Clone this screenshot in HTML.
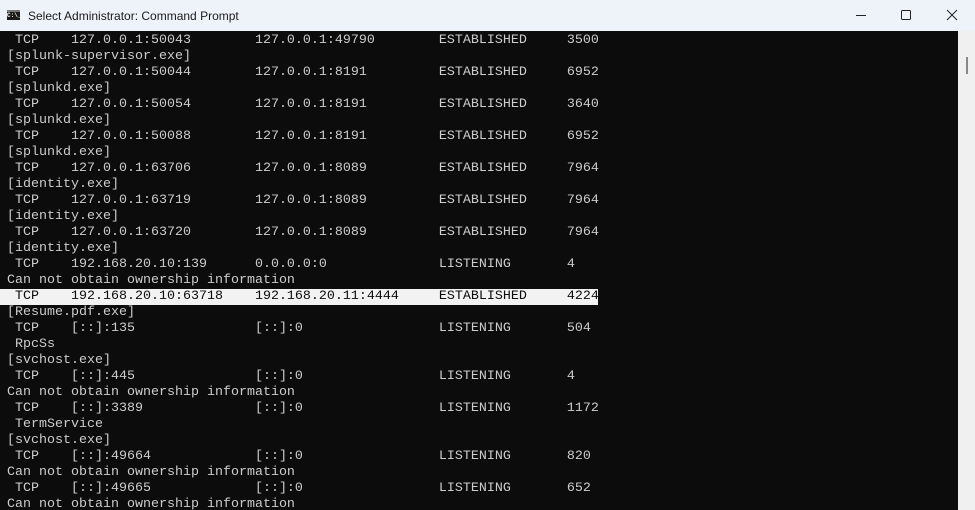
<!DOCTYPE html>
<html><head><meta charset="utf-8"><style>
html,body{margin:0;padding:0;width:975px;height:510px;overflow:hidden;background:#0c0c0c;}
#title{position:absolute;left:0;top:0;width:975px;height:31px;background:#eef3f9;font-family:"Liberation Sans",sans-serif;font-size:12px;color:#1a1a1a;}
#title .t{position:absolute;left:28px;top:9px;}
#icon{position:absolute;left:7px;top:10px;width:13px;height:10px;background:#1a1a1a;border-top:2px solid #777;box-sizing:border-box;color:#fff;font:bold 6px "Liberation Mono",monospace;line-height:8px;text-align:center;}
#term{position:absolute;left:0;top:31px;width:958px;height:479px;background:#0c0c0c;overflow:hidden;}
pre{margin:0;padding:2px 0 0 7px;font-family:"Liberation Mono",monospace;font-size:13.33px;line-height:16px;color:#cccccc;}
.hl{background:#f2f2f2;color:#0c0c0c;display:inline-block;width:591px;margin-left:-7px;padding-left:7px;}
#sb{position:absolute;left:958px;top:31px;width:17px;height:479px;background:#f0f0f0;}
#thumb{position:absolute;left:8px;top:26px;width:2px;height:17px;background:#888;}
</style></head><body>
<div id="title"><div id="icon">C:\_</div><span class="t">Select Administrator: Command Prompt</span>
<svg style="position:absolute;left:855px;top:9px" width="12" height="12"><line x1="1" y1="6.5" x2="11" y2="6.5" stroke="#222" stroke-width="1"/></svg>
<svg style="position:absolute;left:900px;top:9px" width="12" height="12"><rect x="1.5" y="1.5" width="9" height="9" fill="none" stroke="#222" stroke-width="1" rx="1"/></svg>
<svg style="position:absolute;left:946px;top:9px" width="12" height="12"><path d="M1 1L11 11M11 1L1 11" stroke="#222" stroke-width="1"/></svg>
</div>
<div id="term"><pre> TCP    127.0.0.1:50043        127.0.0.1:49790        ESTABLISHED     3500
[splunk-supervisor.exe]
 TCP    127.0.0.1:50044        127.0.0.1:8191         ESTABLISHED     6952
[splunkd.exe]
 TCP    127.0.0.1:50054        127.0.0.1:8191         ESTABLISHED     3640
[splunkd.exe]
 TCP    127.0.0.1:50088        127.0.0.1:8191         ESTABLISHED     6952
[splunkd.exe]
 TCP    127.0.0.1:63706        127.0.0.1:8089         ESTABLISHED     7964
[identity.exe]
 TCP    127.0.0.1:63719        127.0.0.1:8089         ESTABLISHED     7964
[identity.exe]
 TCP    127.0.0.1:63720        127.0.0.1:8089         ESTABLISHED     7964
[identity.exe]
 TCP    192.168.20.10:139      0.0.0.0:0              LISTENING       4
Can not obtain ownership information
<span class="hl"> TCP    192.168.20.10:63718    192.168.20.11:4444     ESTABLISHED     4224</span>
[Resume.pdf.exe]
 TCP    [::]:135               [::]:0                 LISTENING       504
 RpcSs
[svchost.exe]
 TCP    [::]:445               [::]:0                 LISTENING       4
Can not obtain ownership information
 TCP    [::]:3389              [::]:0                 LISTENING       1172
 TermService
[svchost.exe]
 TCP    [::]:49664             [::]:0                 LISTENING       820
Can not obtain ownership information
 TCP    [::]:49665             [::]:0                 LISTENING       652
Can not obtain ownership information</pre></div>
<div id="sb"><div id="thumb"></div></div>
</body></html>
